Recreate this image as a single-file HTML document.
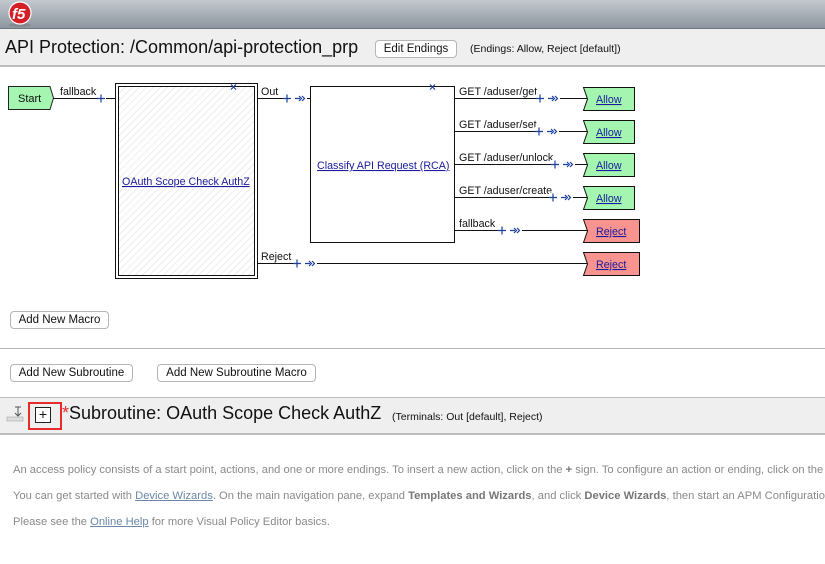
<!DOCTYPE html>
<html><head><meta charset="utf-8"><style>
*{margin:0;padding:0;box-sizing:border-box}
html,body{overflow:hidden}
body{width:825px;height:564px;background:#fff;font-family:"Liberation Sans",sans-serif;position:relative}
.abs{position:absolute}
.hdr{left:0;top:0;width:825px;height:29px;background:linear-gradient(#c3c8ce,#8d969f);border-bottom:1px solid #6d757d}
.bar{left:0;width:825px;background:#efefef;border-bottom:2px solid #bdbdbd}
.btn{position:absolute;height:18px;border:1px solid #b5b5b5;border-radius:4px;background:#fff;font-size:11.5px;line-height:16px;text-align:center;color:#111;font-family:"Liberation Sans",sans-serif}
.help{left:13px;width:812px;overflow:hidden;font-size:11.2px;color:#8a8a8a;white-space:nowrap}
.help a{color:#6a86a8;text-decoration:underline}
.help b{color:#777}
</style></head><body>
<div class="abs hdr"></div>
<svg class="abs" style="left:4px;top:0" width="32" height="28"><ellipse cx="16" cy="25" rx="11" ry="2" fill="#777" opacity=".5"/><circle cx="16" cy="13" r="11" fill="#d51f27"/><circle cx="16" cy="13" r="11" fill="none" stroke="#fff" stroke-width="1.2"/><text x="8" y="19" font-family="Liberation Sans" font-weight="bold" font-size="15" fill="#fff" font-style="italic">f5</text></svg>
<div class="abs bar" style="top:29px;height:38px"></div>
<div class="abs" style="left:5px;top:37px;font-size:18px;color:#111;white-space:nowrap">API Protection: /Common/api-protection_prp</div>
<div class="btn" style="left:375px;top:40px;width:82px">Edit Endings</div>
<div class="abs" style="left:470px;top:43px;font-size:10.5px;color:#111">(Endings: Allow, Reject [default])</div>

<svg class="abs" style="left:0;top:70px" width="825" height="220" font-family="Liberation Sans,sans-serif" font-size="10.7">
<defs><pattern id="h" width="5" height="5" patternUnits="userSpaceOnUse" patternTransform="rotate(45)"><line x1="0" y1="0" x2="0" y2="5" stroke="#ddd" stroke-width="1"/></pattern>
<symbol id="pc" overflow="visible"><path d="M-4 0H4M0 -4V4M8 0H13M12 -2.5L14.5 0L12 2.5M15 -2.5L17.5 0L15 2.5" fill="none" stroke="#1a3f9c" stroke-width="1.2"/></symbol></defs>
<g transform="translate(0,-70)">
<polygon points="8.5,86.5 50,86.5 53.5,98 50,109.5 8.5,109.5" fill="#a3f5b0" stroke="#222"/>
<text x="18" y="102" font-size="11" fill="#111">Start</text>
<line x1="53" y1="98.5" x2="116" y2="98.5" stroke="#111"/>
<text x="60" y="95" fill="#111">fallback</text>
<rect x="97" y="94" width="9" height="9" fill="#fff"/><path d="M97 98.5H105M101 94.5V102.5" stroke="#1a3f9c" stroke-width="1.2"/>
<rect x="115.5" y="83.5" width="142" height="195" fill="#fff" stroke="#111"/>
<rect x="118.5" y="86.5" width="136" height="189" fill="url(#h)" stroke="#111"/>
<path d="M231 84.5L236 89.5M236 84.5L231 89.5" stroke="#1a3f9c" stroke-width="1.2"/>
<text x="122" y="185" fill="#1a1a9c" text-decoration="underline">OAuth Scope Check AuthZ</text>
<line x1="257" y1="98.5" x2="310" y2="98.5" stroke="#111"/>
<text x="261" y="95" fill="#111">Out</text>
<rect x="283" y="94" width="24" height="9" fill="#fff"/><use href="#pc" x="287" y="98.5"/>
<rect x="310.5" y="86.5" width="144" height="156" fill="#fff" stroke="#111"/>
<path d="M430 84.5L435 89.5M435 84.5L430 89.5" stroke="#1a3f9c" stroke-width="1.2"/>
<text x="317" y="169" fill="#1a1a9c" text-decoration="underline">Classify API Request (RCA)</text>
<g stroke="#111"><line x1="454" y1="98.5" x2="587" y2="98.5"/><line x1="454" y1="131.5" x2="587" y2="131.5"/><line x1="454" y1="164.5" x2="587" y2="164.5"/><line x1="454" y1="197.5" x2="587" y2="197.5"/><line x1="454" y1="230.5" x2="587" y2="230.5"/><line x1="257" y1="263.5" x2="587" y2="263.5"/></g>
<g fill="#111"><text x="459" y="95">GET /aduser/get</text><text x="459" y="128">GET /aduser/set</text><text x="459" y="161">GET /aduser/unlock</text><text x="459" y="194">GET /aduser/create</text><text x="459" y="227">fallback</text><text x="261" y="260">Reject</text></g>
<g fill="#fff"><rect x="536" y="94" width="24" height="9"/><rect x="535" y="127" width="24" height="9"/><rect x="551" y="160" width="24" height="9"/><rect x="549" y="193" width="24" height="9"/><rect x="498" y="226" width="24" height="9"/><rect x="293" y="259" width="24" height="9"/></g>
<use href="#pc" x="540" y="98.5"/><use href="#pc" x="539" y="131.5"/><use href="#pc" x="555" y="164.5"/><use href="#pc" x="553" y="197.5"/><use href="#pc" x="502" y="230.5"/><use href="#pc" x="297" y="263.5"/>
<g stroke="#111"><polygon points="583.5,87.5 634.5,87.5 634.5,110.5 583.5,110.5 587.5,99" fill="#a3f5b0"/>
<polygon points="583.5,120.5 634.5,120.5 634.5,143.5 583.5,143.5 587.5,132" fill="#a3f5b0"/>
<polygon points="583.5,153.5 634.5,153.5 634.5,176.5 583.5,176.5 587.5,165" fill="#a3f5b0"/>
<polygon points="583.5,186.5 634.5,186.5 634.5,209.5 583.5,209.5 587.5,198" fill="#a3f5b0"/>
<polygon points="583.5,219.5 639.5,219.5 639.5,242.5 583.5,242.5 587.5,231" fill="#f99390"/>
<polygon points="583.5,252.5 639.5,252.5 639.5,275.5 583.5,275.5 587.5,264" fill="#f99390"/></g>
<g fill="#1a1a9c" text-decoration="underline"><text x="596" y="103">Allow</text><text x="596" y="136">Allow</text><text x="596" y="169">Allow</text><text x="596" y="202">Allow</text><text x="596" y="235">Reject</text><text x="596" y="268">Reject</text></g>
</g></svg>

<div class="btn" style="left:10px;top:311px;width:99px">Add New Macro</div>
<div class="abs" style="left:0;top:348px;width:825px;height:1px;background:#b5b5b5"></div>
<div class="btn" style="left:10px;top:364px;width:123px">Add New Subroutine</div>
<div class="btn" style="left:157px;top:364px;width:159px">Add New Subroutine Macro</div>
<div class="abs bar" style="top:397px;height:38px;border-top:1px solid #bdbdbd"></div>
<svg class="abs" style="left:6px;top:405px" width="20" height="18"><rect x="1" y="12" width="16" height="4" fill="#ddd" stroke="#999" stroke-width=".5"/><line x1="12" y1="2" x2="12" y2="11" stroke="#555"/><path d="M9 8 L12 11 L15 8" fill="none" stroke="#555"/><line x1="9" y1="2" x2="15" y2="2" stroke="#555"/></svg>
<div class="abs" style="left:28px;top:402px;width:34px;height:28px;border:2px solid #e52b2b"></div>
<div class="abs" style="left:35px;top:407px;width:16px;height:16px;border:1px solid #222;background:#fff;font-size:14px;line-height:13px;text-align:center;color:#111">+</div>
<div class="abs" style="left:62px;top:403px;font-size:18px;color:#111;white-space:nowrap"><span style="color:#e52b2b">*</span>Subroutine: OAuth Scope Check AuthZ</div>
<div class="abs" style="left:392px;top:411px;font-size:10.5px;color:#111">(Terminals: Out [default], Reject)</div>
<div class="abs help" style="top:464px">An access policy consists of a start point, actions, and one or more endings. To insert a new action, click on the <b>+</b> sign. To configure an action or ending, click on the link in the action or ending.</div>
<div class="abs help" style="top:490px">You can get started with <a>Device Wizards</a>. On the main navigation pane, expand <b>Templates and Wizards</b>, and click <b>Device Wizards</b>, then start an APM Configuration wizard.</div>
<div class="abs help" style="top:516px">Please see the <a>Online Help</a> for more Visual Policy Editor basics.</div>
</body></html>
